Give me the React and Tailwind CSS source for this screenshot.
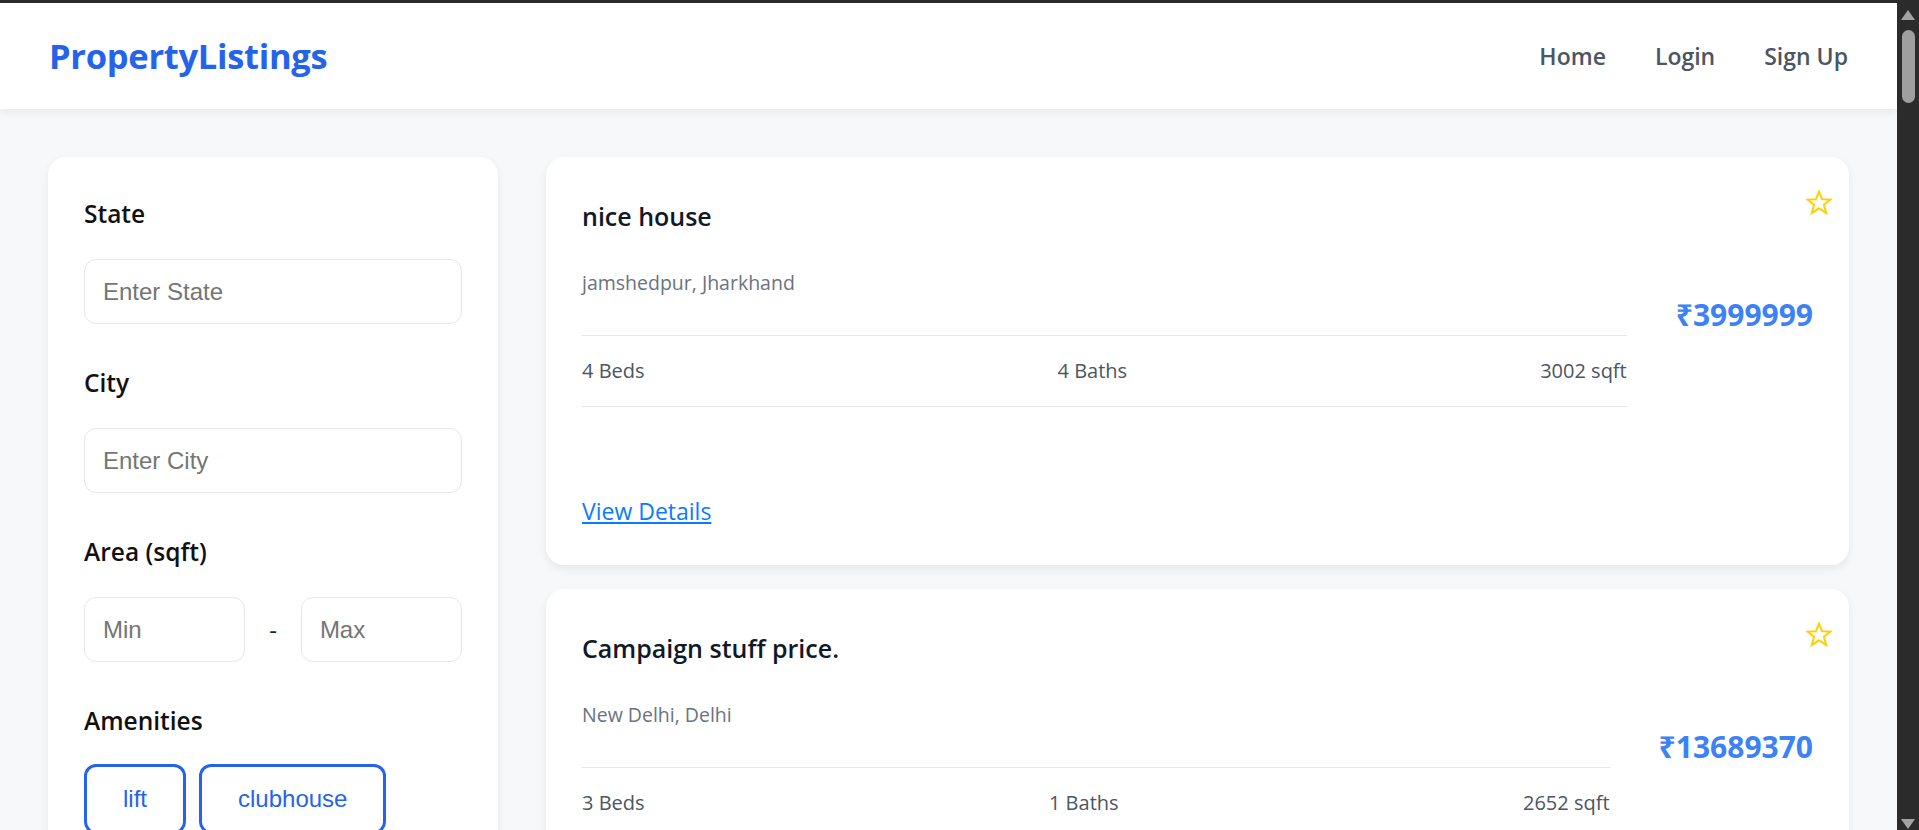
import React from "react";

function Star() {
  return (
    <svg width="26" height="25" viewBox="0 0 26 25" className="absolute top-[33px] right-[17px]">
      <polygon
        points="13,1.5 16.1,9.3 24.5,9.6 17.9,14.8 20.2,23 13,18.3 5.8,23 8.1,14.8 1.5,9.6 9.9,9.3"
        fill="none"
        stroke="#ffd000"
        strokeWidth="2"
        strokeLinejoin="miter"
      />
    </svg>
  );
}

function PropertyCard({ title, location, beds, baths, area, price, showLink }) {
  return (
    <div className="relative bg-white rounded-[18px] shadow-[0_4px_10px_rgba(0,0,0,0.07)] p-[36px] flex gap-[49px]">
      <Star />
      <div className="flex-1 min-w-0 flex flex-col">
        <div className="text-[25px] leading-[42px] font-semibold text-[#111827] pt-[2px]">{title}</div>
        <div className="mt-[31px] text-[19.5px] leading-[30px] text-[#6b7280]">{location}</div>
        <div className="mt-[37px] border-y border-[#e5e7eb] py-[20px] flex justify-between text-[20px] leading-[30px] text-[#4b5563]">
          <span>{beds} Beds</span>
          <span>{baths} Baths</span>
          <span>{area} sqft</span>
        </div>
        {showLink && (
          <a href="#" className="mt-[86px] self-start text-[23px] leading-[36px] text-[#0a7bff] underline">
            View Details
          </a>
        )}
      </div>
      <div className="mt-[101px] text-[30px] leading-[42px] font-bold text-[#3b82f6] shrink-0">₹{price}</div>
    </div>
  );
}

function Field({ label, children, last }) {
  return (
    <div className={last ? "" : "mb-[38px]"}>
      <div className="text-[24.5px] leading-[42px] font-semibold text-[#111] mb-[24px]">{label}</div>
      {children}
    </div>
  );
}

const inputCls =
  "h-[65px] w-full min-w-0 rounded-[12px] border border-[#e5e7eb] bg-white px-[18px] text-[24px] font-['Liberation_Sans',Arial,sans-serif] text-[#222] placeholder:text-[#757575] outline-none";

export default function App() {
  return (
    <div className="h-screen flex flex-col overflow-hidden font-['Open_Sans','Noto_Sans',sans-serif]">
      <div className="h-[3px] bg-[#2b2b2b] shrink-0" />
      <div className="flex-1 flex min-h-0">
        <div className="flex-1 min-w-0 bg-[#f7f8fa] flex flex-col overflow-hidden">
          <header className="h-[106px] shrink-0 bg-white shadow-[0_4px_8px_rgba(0,0,0,0.06)] px-[49px] flex items-center justify-between relative z-10">
            <div className="text-[34.5px] font-bold text-[#2563eb] tracking-[-0.3px]">PropertyListings</div>
            <nav className="flex items-center gap-[49px] text-[23px] font-semibold text-[#4b5563]">
              <a href="#">Home</a>
              <a href="#">Login</a>
              <a href="#">Sign Up</a>
            </nav>
          </header>
          <main className="p-[48px] flex gap-[48px] items-start">
            <aside className="w-[450px] shrink-0 bg-white rounded-[18px] shadow-[0_4px_10px_rgba(0,0,0,0.07)] p-[36px]">
              <Field label="State">
                <input className={inputCls} placeholder="Enter State" />
              </Field>
              <Field label="City">
                <input className={inputCls} placeholder="Enter City" />
              </Field>
              <Field label="Area (sqft)">
                <div className="flex items-center gap-[24px]">
                  <input className={inputCls + " flex-1"} placeholder="Min" />
                  <span className="text-[24px] text-[#222]">-</span>
                  <input className={inputCls + " flex-1"} placeholder="Max" />
                </div>
              </Field>
              <Field label="Amenities" last>
                <div className="flex flex-wrap gap-[13px] -mt-[2px]">
                  {["lift", "clubhouse"].map((a) => (
                    <button
                      key={a}
                      className="border-[3px] border-[#2563eb] rounded-[12px] px-[36px] py-[14px] text-[24px] leading-[36px] text-[#2563eb] font-['Liberation_Sans',Arial,sans-serif] bg-white"
                    >
                      {a}
                    </button>
                  ))}
                </div>
              </Field>
            </aside>
            <section className="flex-1 min-w-0 flex flex-col gap-[24px]">
              <PropertyCard
                title="nice house"
                location="jamshedpur, Jharkhand"
                beds={4}
                baths={4}
                area={3002}
                price="3999999"
                showLink
              />
              <PropertyCard
                title="Campaign stuff price."
                location="New Delhi, Delhi"
                beds={3}
                baths={1}
                area={2652}
                price="13689370"
                showLink
              />
            </section>
          </main>
        </div>
        <div className="w-[22px] shrink-0 bg-[#2b2b2b] flex flex-col items-center pt-[7px] pb-[1px]">
          <svg width="14" height="10" viewBox="0 0 14 10">
            <polygon points="7,0 14,10 0,10" fill="#a3a3a3" />
          </svg>
          <div className="mt-[10px] w-[13px] h-[73px] rounded-full bg-[#9f9f9f]" />
          <div className="flex-1" />
          <svg width="14" height="10" viewBox="0 0 14 10">
            <polygon points="0,0 14,0 7,10" fill="#a3a3a3" />
          </svg>
        </div>
      </div>
    </div>
  );
}
